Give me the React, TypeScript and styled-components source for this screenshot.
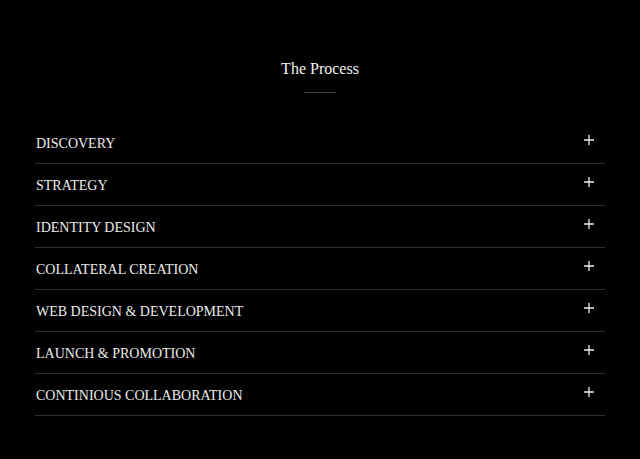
import React from "react";
import styled, { createGlobalStyle } from "styled-components";

const Global = createGlobalStyle`
  html, body { margin: 0; padding: 0; background: #000; }
  body { font-family: "Liberation Serif", "DejaVu Serif", serif; color: #ececec; }
`;

const Section = styled.section`
  width: 570px;
  margin: 0 auto;
  padding-top: 58px;
  height: 459px;
  box-sizing: border-box;
`;

const Title = styled.h2`
  margin: 0;
  font-weight: 400;
  font-size: 16px;
  line-height: 22px;
  text-align: center;
  color: #f2f2f2;
`;

const Rule = styled.div`
  width: 32px;
  height: 1px;
  background: #444;
  margin: 12px auto 0;
`;

const List = styled.ul`
  list-style: none;
  margin: 29px 0 0;
  padding: 0;
`;

const Row = styled.li`
  display: flex;
  align-items: center;
  justify-content: space-between;
  height: 41px;
  border-bottom: 1px solid #2e2e2e;
  padding: 0 1px;
`;

const Label = styled.span`
  font-size: 14px;
  padding-top: 2px;
  color: #ececec;
`;

const Plus = styled.svg`
  width: 10px;
  height: 10px;
  margin-right: 10px;
  margin-top: -5px;
`;

const items = [
  "DISCOVERY",
  "STRATEGY",
  "IDENTITY DESIGN",
  "COLLATERAL CREATION",
  "WEB DESIGN & DEVELOPMENT",
  "LAUNCH & PROMOTION",
  "CONTINIOUS COLLABORATION",
];

export default function App() {
  return (
    <>
      <Global />
      <Section>
        <Title>The Process</Title>
        <Rule />
        <List>
          {items.map((t) => (
            <Row key={t}>
              <Label>{t}</Label>
              <Plus viewBox="0 0 10 10">
                <path d="M5 0v10M0 5h10" stroke="#ececec" strokeWidth="1.3" />
              </Plus>
            </Row>
          ))}
        </List>
      </Section>
    </>
  );
}
